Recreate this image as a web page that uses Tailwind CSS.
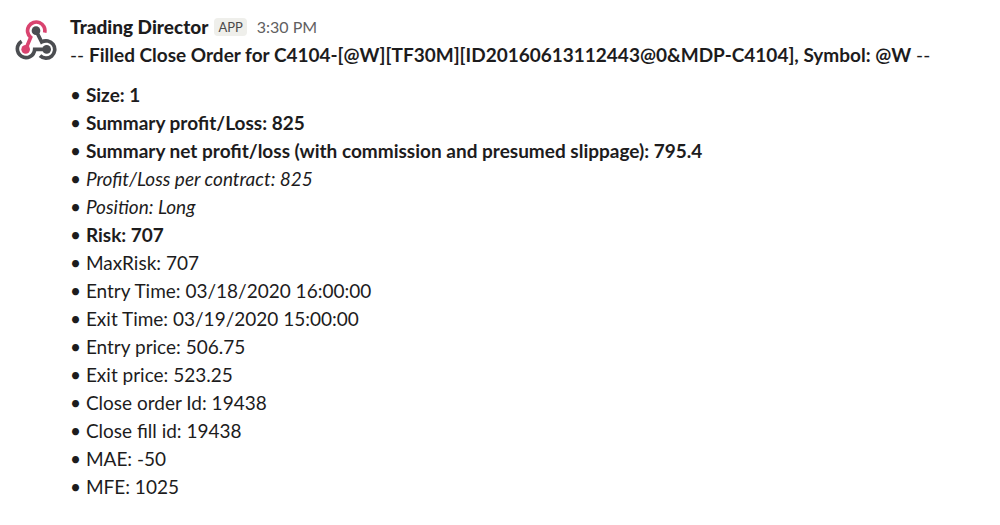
<!DOCTYPE html>
<html lang="en">
<head>
    <meta charset="UTF-8">
    <meta name="viewport" content="width=device-width, initial-scale=1.0">
    <title>Trading Director</title>
    <script src="https://cdn.jsdelivr.net/npm/@tailwindcss/browser@4"></script>
</head>
<body class="bg-white font-['Lato',sans-serif] text-[#1d1c1d]">
<article class="flex gap-[13px] px-[15px] pt-[13px] text-[19px] leading-7">
    <!-- webhook avatar -->
    <svg class="mt-[7px] h-10 w-[42px] shrink-0" viewBox="30 30 126 120" fill="none" stroke-width="11" aria-hidden="true">
        <g stroke="#4b4d51">
            <path d="M93 62L110 96A26 26 0 1 1 105 137"/>
            <path d="M50 94A26 26 0 1 0 89 118H125"/>
        </g>
        <path d="M119 68A26 26 0 1 0 77 82L62 118" stroke="#d9436f"/>
        <circle cx="93" cy="62" r="13" fill="#4b4d51"/>
        <circle cx="125" cy="118" r="13" fill="#4b4d51"/>
        <circle cx="62" cy="118" r="13" fill="#d9436f"/>
    </svg>

    <div class="min-w-0">
        <header class="flex items-center">
            <h1 class="font-black">Trading Director</h1>
            <span class="ml-1.5 rounded-sm bg-[#efefeb] px-1 text-[13px] leading-[18px] text-[#4a4a4a]">APP</span>
            <time class="ml-2.5 text-base text-[#616061]">3:30 PM</time>
        </header>
        <p>-- <b>Filled Close Order for C4104-[@W][TF30M][ID20160613112443@0&amp;MDP-C4104], Symbol: @W</b> --</p>
        <ul class="mt-3">
            <li>• <b>Size: 1</b></li>
            <li>• <b>Summary profit/Loss: 825</b></li>
            <li>• <b>Summary net profit/loss (with commission and presumed slippage): 795.4</b></li>
            <li>• <i>Profit/Loss per contract: 825</i></li>
            <li>• <i>Position: Long</i></li>
            <li>• <b>Risk: 707</b></li>
            <li>• MaxRisk: 707</li>
            <li>• Entry Time: 03/18/2020 16:00:00</li>
            <li>• Exit Time: 03/19/2020 15:00:00</li>
            <li>• Entry price: 506.75</li>
            <li>• Exit price: 523.25</li>
            <li>• Close order Id: 19438</li>
            <li>• Close fill id: 19438</li>
            <li>• MAE: -50</li>
            <li>• MFE: 1025</li>
        </ul>
    </div>
</article>
</body>
</html>
